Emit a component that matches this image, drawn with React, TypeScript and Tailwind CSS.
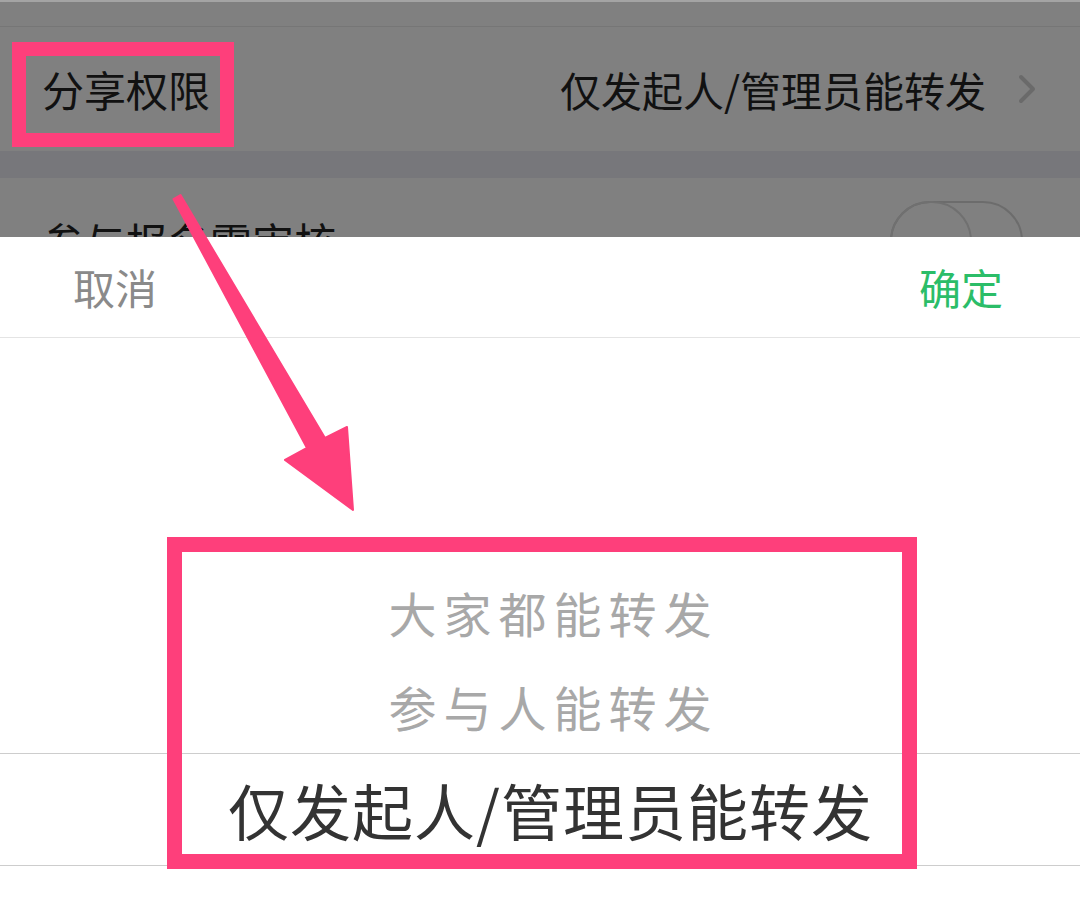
import React from 'react';

const FONT = "font-['Noto_Sans_CJK_SC','Noto_Sans',sans-serif]";

const OPTIONS = ['大家都能转发', '参与人能转发'];

export default function App() {
  return (
    <div className={`relative w-[1080px] h-[911px] overflow-hidden flex flex-col bg-white ${FONT}`}>
      {/* 背后的设置页，被遮罩压暗 */}
      <div className="bg-[#808080] flex-shrink-0">
        <div className="h-[26px] border-t-2 border-[#a4a4a4]" />
        <div className="h-px bg-[#767676]" />
        <div className="h-[124px] flex items-center justify-between pl-[42px] pr-[44px]">
          <span className="text-[42px] leading-none text-[#111]">分享权限</span>
          <div className="flex items-center gap-[32px]">
            <span className="text-[41px] leading-none text-[#111]">仅发起人/管理员能转发</span>
            <svg width="18" height="30" viewBox="0 0 18 30" fill="none">
              <polyline points="3,3 15,15 3,27" stroke="#6a6a6a" strokeWidth="4" strokeLinecap="round" strokeLinejoin="round" />
            </svg>
          </div>
        </div>
        <div className="h-[27px] bg-[#77777b]" />
        <div className="h-[59px] overflow-hidden flex justify-between pl-[42px] pr-[57px]">
          <span className="text-[42px] leading-none text-[#111] mt-[42px]">参与报名需审核</span>
          <div className="relative w-[133px] h-[80px] mt-[23px] rounded-full border-2 border-[#6c6c6c]">
            <div className="absolute left-[-2px] top-[-2px] w-[82px] h-[80px] rounded-full border-2 border-[#707070]" />
          </div>
        </div>
      </div>

      {/* 底部选择器 */}
      <div className="flex-1 bg-white flex flex-col">
        <div className="h-[101px] flex items-center justify-between pl-[73px] pr-[77px] border-b border-[#e4e4e4]">
          <span className="text-[42px] leading-none text-[#8a8a8a]">取消</span>
          <span className="text-[42px] leading-none text-[#2bbd68]">确定</span>
        </div>
        <div className="pt-[227px] flex flex-col">
          {OPTIONS.map((opt) => (
            <div key={opt} className="h-[94px] flex items-center justify-center pl-[20px]">
              <span className="text-[48px] leading-none tracking-[7px] text-[#a8a8a8] pl-[7px]">{opt}</span>
            </div>
          ))}
          <div className="h-[113px] flex items-center justify-center pl-[20px] border-y border-[#cdcdcd]">
            <span className="text-[61px] leading-none tracking-[1px] text-[#333] pl-[1px]">仅发起人/管理员能转发</span>
          </div>
        </div>
      </div>

      {/* 标注框和箭头 */}
      <div className="absolute left-[12px] top-[42px] w-[222px] h-[105px] border-[14px] border-[#fe3f7b]" />
      <div className="absolute left-[167px] top-[537px] w-[750px] h-[332px] border-[15px] border-[#fe3f7b]" />
      <svg className="absolute left-0 top-0" width="1080" height="911" viewBox="0 0 1080 911">
        <polygon
          points="173.5,199 307,448 285,460 353,510 347,427 325,438 180.5,195"
          fill="#fe3f7b"
          stroke="#fe3f7b"
          strokeWidth="2"
          strokeLinejoin="round"
        />
      </svg>
    </div>
  );
}
